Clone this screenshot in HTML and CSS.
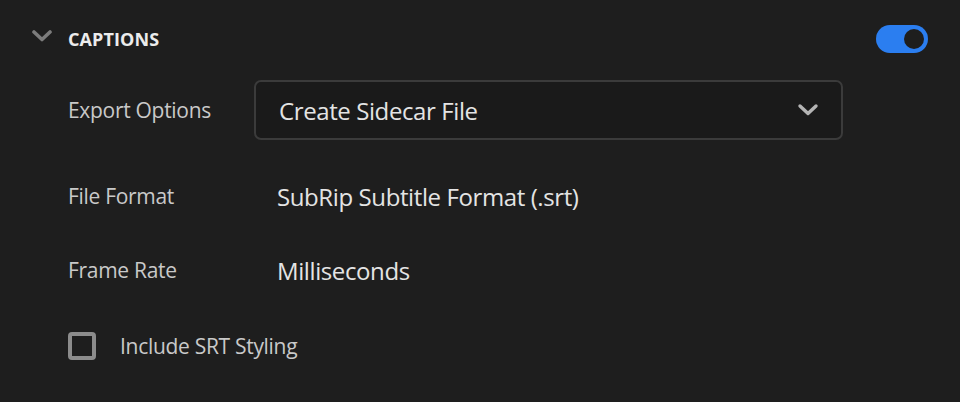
FILE: index.html
```html
<!DOCTYPE html>
<html>
<head>
<meta charset="utf-8">
<link rel="stylesheet" href="styles.css">
</head>
<body>
<div class="panel">
  <div class="header">
    <svg class="twisty" width="20" height="12" viewBox="0 0 20 12"><path d="M2 2 L10 9.5 L18 2" fill="none" stroke="#7c7c7c" stroke-width="3.6" stroke-linecap="round" stroke-linejoin="round"/></svg>
    <span class="title">CAPTIONS</span>
    <span class="spacer"></span>
    <span class="toggle"><span class="knob"></span></span>
  </div>
  <div class="rows">
    <div class="row row-select">
      <span class="label">Export Options</span>
      <div class="select">
        <span class="value">Create Sidecar File</span>
        <svg class="caret" width="22" height="14" viewBox="0 0 22 14"><path d="M3 3 L11 10.5 L19 3" fill="none" stroke="#b4b4b4" stroke-width="3.4" stroke-linecap="round" stroke-linejoin="round"/></svg>
      </div>
    </div>
    <div class="row row-format">
      <span class="label">File Format</span>
      <span class="value plain">SubRip Subtitle Format (.srt)</span>
    </div>
    <div class="row row-rate">
      <span class="label">Frame Rate</span>
      <span class="value plain">Milliseconds</span>
    </div>
    <div class="row row-check">
      <span class="checkbox"></span>
      <span class="check-label">Include SRT Styling</span>
    </div>
  </div>
</div>
</body>
</html>
```
FILE: styles.css
```css
html, body {
  margin: 0;
  padding: 0;
  background: #1e1e1e;
  width: 960px;
  height: 402px;
  overflow: hidden;
}
.panel {
  font-family: "Open Sans", "Noto Sans", sans-serif;
  color: #e2e2e2;
}
.header {
  display: flex;
  align-items: center;
  height: 80px;
  padding: 0 32px 0 32px;
  box-sizing: border-box;
}
.twisty {
  display: block;
  margin-top: -8px;
}
.title {
  margin-left: 16px;
  font-weight: 700;
  font-size: 18px;
  letter-spacing: 0.1px;
  color: #ececec;
  margin-top: -2px;
}
.spacer { flex: 1; }
.toggle {
  width: 52px;
  height: 28px;
  border-radius: 14px;
  background: #2b7ef0;
  position: relative;
  margin-top: -2px;
}
.knob {
  position: absolute;
  right: 4px;
  top: 4px;
  width: 20px;
  height: 20px;
  border-radius: 50%;
  background: #1e1e1e;
}
.rows {
  padding-left: 68px;
  display: flex;
  flex-direction: column;
}
.row {
  display: grid;
  grid-template-columns: 186px 589px;
  align-items: center;
}
.label {
  font-size: 21px;
  color: #c9c9c9;
  letter-spacing: -0.3px;
}
.select {
  height: 60px;
  box-sizing: border-box;
  border: 2px solid #3b3b3b;
  border-radius: 7px;
  background: #1a1a1a;
  display: flex;
  align-items: center;
  padding: 0 22px 0 23px;
}
.value {
  font-size: 24px;
  color: #e4e4e4;
  letter-spacing: -0.4px;
  flex: 1;
}
.value.plain {
  padding-left: 23px;
}
.caret { display: block; }
.row-format { height: 48px; margin-top: 32px; }
.row-rate { height: 48px; margin-top: 26px; }
.row-check {
  display: flex;
  align-items: center;
  height: 48px;
  margin-top: 28px;
}
.checkbox {
  width: 28px;
  height: 28px;
  box-sizing: border-box;
  border: 4px solid #8c8c8c;
  border-radius: 4px;
}
.check-label {
  margin-left: 24px;
  font-size: 21px;
  color: #c9c9c9;
  letter-spacing: -0.3px;
}
```
